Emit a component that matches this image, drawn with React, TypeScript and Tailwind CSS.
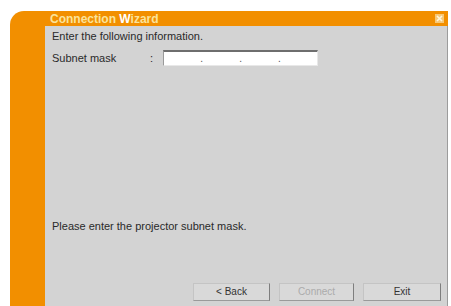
import React from "react";

function IpField() {
  // four empty octets separated by dots
  return (
    <div className="w-[155px] h-[16px] bg-white border-t-2 border-t-[#6e6e6e] border-l border-l-[#9a9a9a] border-b border-b-[#e8e8e8] border-r border-r-[#e8e8e8] flex items-end pb-[1px]">
      <div className="flex-1" />
      <span className="leading-[10px] text-[10px] text-[#555]">.</span>
      <div className="flex-1" />
      <span className="leading-[10px] text-[10px] text-[#555]">.</span>
      <div className="flex-1" />
      <span className="leading-[10px] text-[10px] text-[#555]">.</span>
      <div className="flex-1" />
    </div>
  );
}

function WizButton({ label, width, disabled }: { label: string; width: string; disabled?: boolean }) {
  return (
    <button
      className={
        width +
        " h-[18px] border border-[#c4c4c4] border-r-[#7e7e7e] border-b-[#9a9a9a] bg-[#d9d9d9] text-[10px] leading-none " +
        (disabled ? "text-[#ababab]" : "text-[#333]")
      }
    >
      {label}
    </button>
  );
}

export default function App() {
  return (
    <div className="w-[451px] h-[306px] bg-white pl-[10px] pt-[11px] pr-[3px] overflow-hidden font-['Liberation_Sans',Arial,sans-serif]">
      <div className="h-full bg-[#f28f00] rounded-tl-[14px] pl-[35px] flex flex-col">
        <div className="h-[15px] flex items-center justify-between pl-[5px] pr-[4px]">
          <span className="text-[12px] leading-none font-bold text-[#fbe39a]">
            Connection <span className="text-white">W</span>izard
          </span>
          <svg width="9" height="9" viewBox="0 0 9 9">
            <rect x="0" y="0" width="9" height="9" fill="#f7c877" />
            <path d="M2 2 L7 7 M7 2 L2 7" stroke="#fff6dc" strokeWidth="1.6" />
          </svg>
        </div>
        <div className="flex-1 bg-[#d3d3d3] border-r border-r-[#9c9c9c] pl-[7px] pr-[6px] pb-[5px] flex flex-col text-[11px] text-[#2a2a2a]">
          <div className="mt-[4px] h-[13px] leading-[13px]">Enter the following information.</div>
          <div className="mt-[7px] flex items-center">
            <span className="w-[98px]">Subnet mask</span>
            <span className="w-[13px]">:</span>
            <IpField />
          </div>
          <div className="mt-auto mb-[50px] leading-[13px]">Please enter the projector subnet mask.</div>
          <div className="flex justify-end gap-[9px]">
            <WizButton label="< Back" width="w-[77px]" />
            <WizButton label="Connect" width="w-[75px]" disabled />
            <WizButton label="Exit" width="w-[78px]" />
          </div>
        </div>
      </div>
    </div>
  );
}
